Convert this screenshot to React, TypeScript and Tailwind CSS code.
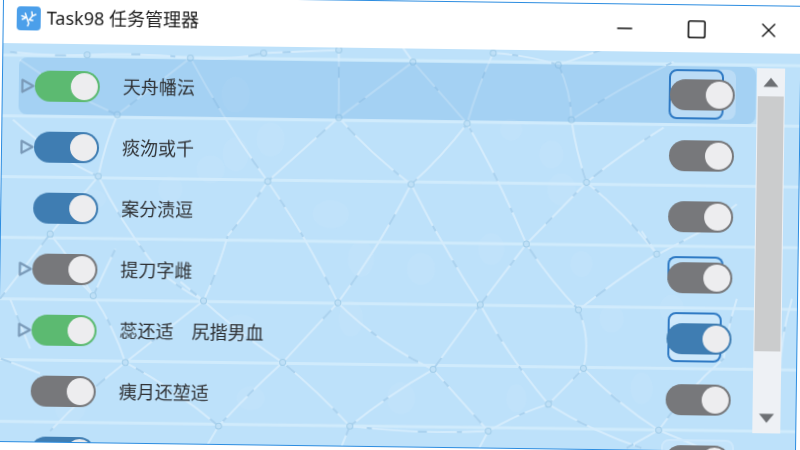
import { Minus, Square, X } from "lucide-react";

type ToggleColor = "green" | "blue" | "gray";

interface Row {
    label: string;
    expand: boolean;
    left: ToggleColor;
    right: ToggleColor;
    ring?: "full" | "top" | "faint" | "soft";
}

const rows: Row[] = [
    { label: "天舟幡沄", expand: true, left: "green", right: "gray", ring: "soft" },
    { label: "痰沕或千", expand: true, left: "blue", right: "gray" },
    { label: "案分渍逗", expand: false, left: "blue", right: "gray" },
    { label: "提刀字雌", expand: true, left: "gray", right: "gray", ring: "top" },
    { label: "蕊还适　尻揩男血", expand: true, left: "green", right: "blue", ring: "full" },
    { label: "痍月还堃适", expand: false, left: "gray", right: "gray" },
    { label: "　逄说垢", expand: false, left: "blue", right: "gray", ring: "faint" },
];

// net of the wallpaper, in screenshot coordinates: x1, y1, x2, y2, bend
const edges: number[][] = [
    [10, 52, 87, 55, 3], [87, 55, 190, 58, -4], [190, 58, 263, 53, 6], [263, 53, 338, 50, 0], [338, 50, 338, 118, 0],
    [117, 115, 190, 58, 0], [20, 60, 117, 115, 6], [117, 115, 98, 177, 3], [13, 120, 98, 177, 8],
    [98, 177, 50, 235, 0], [50, 235, 0, 300, 0], [98, 177, 157, 270, 6], [157, 270, 203, 302, 4],
    [50, 235, 93, 297, -3], [190, 58, 267, 182, 5], [267, 182, 227, 237, -2], [227, 237, 203, 302, -3],
    [267, 182, 337, 304, -6], [338, 118, 267, 182, 0], [338, 118, 412, 62, 0], [338, 118, 410, 185, 5],
    [412, 62, 466, 124, 0], [412, 62, 400, 45, 0], [466, 124, 410, 185, -4], [466, 124, 492, 53, -3],
    [466, 124, 525, 245, -4], [410, 185, 337, 304, -6], [410, 185, 479, 306, 4], [525, 245, 479, 306, 0],
    [525, 245, 585, 183, 0], [525, 245, 577, 311, 4], [492, 53, 557, 65, -4], [557, 65, 600, 50, 0],
    [557, 65, 570, 120, -6], [570, 120, 585, 183, 3], [570, 120, 672, 62, -4], [585, 183, 662, 128, -3],
    [585, 183, 655, 255, -6], [577, 311, 655, 255, -2], [577, 311, 582, 370, -10], [337, 304, 432, 371, 10],
    [479, 306, 547, 406, 6], [479, 306, 432, 371, 0], [432, 371, 349, 428, 4], [432, 371, 487, 433, 0],
    [582, 370, 547, 406, 0], [582, 370, 657, 432, 6], [547, 406, 487, 433, 4], [547, 406, 640, 450, 6],
    [349, 428, 487, 433, 6], [337, 304, 282, 364, 0], [282, 364, 203, 302, -4], [282, 364, 349, 428, -3],
    [282, 364, 218, 428, 2], [203, 302, 125, 364, 0], [203, 302, 180, 283, 0], [125, 364, 93, 297, 5],
    [125, 364, 218, 428, -6], [125, 364, 50, 433, 4], [218, 428, 205, 450, 0], [655, 255, 640, 232, 0],
    [657, 255, 700, 232, 0], [349, 428, 340, 450, 0], [487, 433, 478, 450, 0], [657, 432, 625, 450, 0],
    [657, 432, 700, 450, 0], [93, 297, 60, 262, 0], [93, 297, 115, 250, 0], [0, 360, 40, 375, 0], [10, 300, 30, 350, 0],
    [700, 232, 735, 205, 0], [657, 432, 722, 360, -6], [722, 360, 735, 300, -3], [790, 300, 778, 380, 6],
];

const nodes: number[][] = [
    [87, 55], [190, 58], [263, 53], [338, 50], [117, 115], [98, 177], [50, 235], [267, 182], [338, 118], [412, 62],
    [466, 124], [492, 53], [410, 185], [525, 245], [557, 65], [570, 120], [585, 183], [655, 255], [337, 304],
    [479, 306], [577, 311], [432, 371], [582, 370], [547, 406], [349, 428], [487, 433], [657, 432], [203, 302],
    [282, 364], [125, 364], [218, 428], [93, 297],
];

const bokeh: number[][] = [
    [235, 95, 14, 18], [270, 140, 14, 17], [235, 155, 13, 17], [210, 170, 14, 14], [170, 190, 12, 13], [330, 215, 18, 14],
    [350, 320, 12, 18], [420, 270, 14, 16], [560, 190, 14, 16], [550, 155, 12, 14], [510, 130, 11, 11], [360, 260, 13, 18],
    [580, 265, 11, 13], [610, 320, 12, 14], [640, 390, 11, 16], [515, 400, 10, 14], [490, 250, 13, 16], [90, 200, 16, 10],
    [240, 330, 18, 14], [45, 330, 16, 15], [70, 410, 15, 15], [400, 400, 14, 16], [670, 310, 12, 14], [250, 400, 14, 12],
];

const dashes = ["7 38 11 52", "5 46 9 30", "12 60", "6 34 8 70"];

function edgePath([x1, y1, x2, y2, bend]: number[]) {
    const dx = x2 - x1;
    const dy = y2 - y1;
    const len = Math.hypot(dx, dy) || 1;
    const cx = (x1 + x2) / 2 + (-dy / len) * bend;
    const cy = (y1 + y2) / 2 + (dx / len) * bend;
    return `M${x1} ${y1}Q${cx} ${cy} ${x2} ${y2}`;
}

function Wallpaper() {
    return (
        <svg className="absolute inset-0 w-full h-full" viewBox="0 0 795 400" preserveAspectRatio="none" aria-hidden="true">
            <g transform="translate(-4 -43) rotate(-0.77)">
                {bokeh.map(([x, y, rx, ry], i) => (
                    <ellipse key={i} cx={x} cy={y} rx={rx} ry={ry} fill="#d4edff" opacity="0.16" />
                ))}
                {[55, 116, 177, 238, 300, 361, 423].map((y) => (
                    <path key={y} d={`M-10 ${y}L820 ${y + 11}`} stroke="#d3ecfc" strokeWidth="3" fill="none" opacity="0.85" />
                ))}
                {edges.map((edge, i) => (
                    <path key={i} d={edgePath(edge)} stroke="#d5ecfc" strokeWidth="2" fill="none" />
                ))}
                {edges.map((edge, i) => (
                    <path
                        key={i}
                        d={edgePath(edge)}
                        stroke="#8fc2e6"
                        strokeWidth="2"
                        strokeDasharray={dashes[i % 4]}
                        strokeDashoffset={i * 7}
                        fill="none"
                        opacity="0.6"
                    />
                ))}
                {nodes.map(([x, y], i) => (
                    <circle key={i} cx={x} cy={y} r="3" fill="#bfe0f7" stroke="#a2cde9" strokeWidth="1" />
                ))}
            </g>
        </svg>
    );
}

function Toggle({ color }: { color: ToggleColor }) {
    const track =
        color === "green"
            ? "bg-[#5cba71]"
            : color === "blue"
              ? "bg-[#3f7db2]"
              : "bg-[#77787b]";
    return (
        <div className={`relative flex items-center justify-end w-[65px] h-[31px] rounded-full pr-[2px] shrink-0 ${track}`}>
            <div className="w-[27px] h-[27px] rounded-full bg-[#ededef]" />
        </div>
    );
}

function ExpandArrow() {
    return (
        <svg width="14" height="15" viewBox="0 0 14 15" className="shrink-0" aria-hidden="true">
            <path d="M1.5 1.5L12.5 7.5L1.5 13.5Z" fill="none" stroke="#7a9ab8" strokeWidth="2.2" strokeLinejoin="round" />
        </svg>
    );
}

function RightSwitch({ row }: { row: Row }) {
    return (
        <div className="relative mr-[21px]">
            {row.ring === "soft" && (
                <>
                    <div className="absolute left-0 top-[-10px] w-[66px] h-[50px] rounded-lg bg-white/25" />
                    <div className="absolute left-[-1px] top-[-10px] w-[55px] h-[50px] rounded-lg border-2 border-[#2f7ac4]" />
                </>
            )}
            {row.ring === "full" && (
                <div className="absolute left-[1px] top-[-11px] w-[54px] h-[50px] rounded-lg border-2 border-[#2f7ac4] bg-white/25" />
            )}
            {row.ring === "top" && (
                <div className="absolute left-0 top-[-6px] w-[56px] h-[24px] rounded-t-lg border-2 border-b-0 border-[#2f7ac4]" />
            )}
            {row.ring === "faint" && (
                <div className="absolute left-[-4px] top-[-6px] w-[73px] h-[40px] rounded-lg bg-white/10 border-2 border-[#cde8fc]" />
            )}
            <div className="relative">
                <Toggle color={row.right} />
            </div>
        </div>
    );
}

function ScrollBar() {
    return (
        <div className="flex flex-col shrink-0 w-[28px] h-[365px] mt-[15px] bg-[#eef1f5]">
            <div className="flex items-center justify-center h-[28px]">
                <svg width="16" height="10" viewBox="0 0 16 10" aria-hidden="true">
                    <path d="M8 0.5L15.5 9.5H0.5Z" fill="#6d7074" />
                </svg>
            </div>
            <div className="h-[255px] mx-[1px] bg-[#cbcccd]" />
            <div className="flex flex-1 items-end justify-center pb-[10px]">
                <svg width="16" height="10" viewBox="0 0 16 10" aria-hidden="true">
                    <path d="M8 9.5L15.5 0.5H0.5Z" fill="#6d7074" />
                </svg>
            </div>
        </div>
    );
}

function Logo() {
    return (
        <div className="flex items-center justify-center w-[24px] h-[24px] mb-[4px] rounded-[4px] bg-[#4b9fea] shrink-0">
            <svg width="18" height="18" viewBox="0 0 18 18" fill="none" stroke="#fff" strokeWidth="1.5" strokeLinecap="round" aria-hidden="true">
                <path d="M2 6.5L7 8.5L9 14L8 16.5M9.5 10.5L12.5 6.5L16 5M12.5 6.5L12 2.5M7 8.5L5.5 4M13 11L9.5 10.5M2.5 10L5 9" />
            </svg>
        </div>
    );
}

export default function App() {
    return (
        <div className="relative w-[800px] h-[450px] overflow-hidden bg-white">
            <div className="absolute left-[3px] top-[-5px] flex flex-col w-[799px] h-[447px] origin-[-3px_5px] rotate-[0.77deg] border-[1.5px] border-[#2b8ce0] bg-white blur-[0.5px] font-['Noto_Sans','Noto_Sans_CJK_SC',sans-serif]">
                <div className="flex items-center h-[47px] shrink-0 bg-white pl-[13px]">
                    <Logo />
                    <span className="ml-[6px] mb-[5px] text-[18px] text-[#1a1a1a] whitespace-nowrap">Task98 任务管理器</span>
                    <div className="flex items-center ml-auto mr-[20px] text-[#111]">
                        <Minus size={24} strokeWidth={1.4} className="mr-[49px]" />
                        <Square size={22} strokeWidth={1.6} absoluteStrokeWidth className="mr-[49px]" />
                        <X size={24} strokeWidth={1.4} />
                    </div>
                </div>

                <div className="relative flex flex-1 min-h-0 overflow-hidden bg-[#bde1fa]">
                    <Wallpaper />
                    <div className="relative flex flex-col w-[754px] shrink-0 pt-[12px] pl-[16px]">
                        {rows.map((row, index) => (
                            <div
                                key={index}
                                className={`flex items-center shrink-0 w-[737px] h-[57px] my-[2px] pl-[2px] rounded-lg ${index === 0 ? "bg-[#5ba3e0]/25" : ""}`}
                            >
                                <div className="w-[14px] shrink-0">{row.expand && <ExpandArrow />}</div>
                                <Toggle color={row.left} />
                                <span className="ml-[23px] text-[18px] text-[#2e3033] whitespace-pre">{row.label}</span>
                                <div className="ml-auto">
                                    <RightSwitch row={row} />
                                </div>
                            </div>
                        ))}
                    </div>
                    <div className="relative">
                        <ScrollBar />
                    </div>
                </div>
            </div>
        </div>
    );
}
